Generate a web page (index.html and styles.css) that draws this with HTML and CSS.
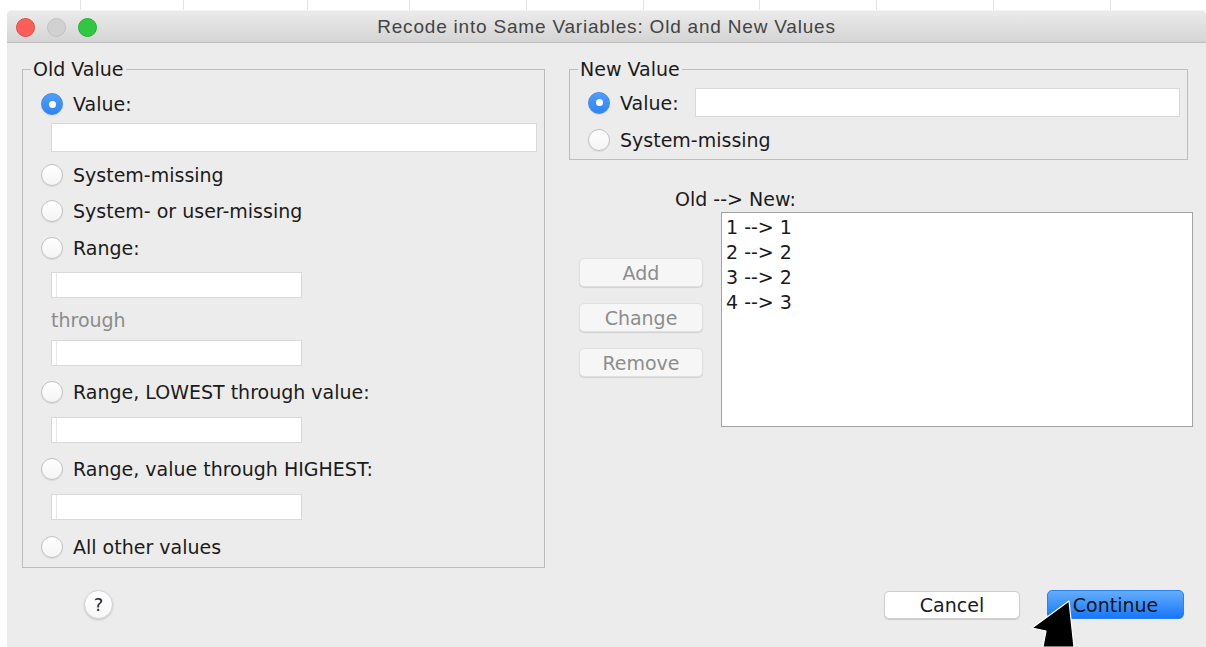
FILE: index.html
```html
<!DOCTYPE html>
<html lang="en">
<head>
<meta charset="utf-8">
<title>Recode into Same Variables: Old and New Values</title>
<link rel="stylesheet" href="styles.css">
</head>
<body>
  <div class="backdrop">
    <span class="cell w81"></span><span class="cell w103"></span><span class="cell w124"></span><span class="cell w102"></span><span class="cell w117"></span><span class="cell w117"></span><span class="cell w116"></span><span class="cell w117"></span><span class="cell w117"></span><span class="cell w117"></span>
  </div>

  <div class="window">
    <div class="titlebar">
      <div class="lights">
        <span class="light red"></span>
        <span class="light idle"></span>
        <span class="light green"></span>
      </div>
      <div class="title">Recode into Same Variables: Old and New Values</div>
      <div></div>
    </div>

    <div class="content">
      <div class="main">
        <fieldset class="group old">
          <legend>Old Value</legend>
          <div class="row first"><span class="radio on"></span>Value:</div>
          <div class="field wide"></div>
          <div class="row after-wide"><span class="radio"></span>System-missing</div>
          <div class="row next"><span class="radio"></span>System- or user-missing</div>
          <div class="row next2"><span class="radio"></span>Range:</div>
          <div class="field short f-range"></div>
          <div class="through">through</div>
          <div class="field short f-through"></div>
          <div class="row after-short"><span class="radio"></span>Range, LOWEST through value:</div>
          <div class="field short f-sub"></div>
          <div class="row after-short"><span class="radio"></span>Range, value through HIGHEST:</div>
          <div class="field short f-sub"></div>
          <div class="row last"><span class="radio"></span>All other values</div>
        </fieldset>

        <div class="right">
          <fieldset class="group new">
            <legend>New Value</legend>
            <div class="row value-row"><span class="radio on"></span><span class="value-label">Value:</span><span class="field grow"></span></div>
            <div class="row new-miss"><span class="radio"></span>System-missing</div>
          </fieldset>

          <div class="map-label">Old --&gt; New:</div>
          <div class="map-row">
            <div class="actions">
              <button class="btn disabled">Add</button>
              <button class="btn disabled">Change</button>
              <button class="btn disabled">Remove</button>
            </div>
            <div class="listbox">
              <div class="entry">1 --&gt; 1</div>
              <div class="entry">2 --&gt; 2</div>
              <div class="entry">3 --&gt; 2</div>
              <div class="entry">4 --&gt; 3</div>
            </div>
          </div>
        </div>
      </div>

      <div class="footer">
        <button class="help">?</button>
        <div class="spacer"></div>
        <button class="btn cancel">Cancel</button>
        <button class="btn primary">Continue</button>
      </div>
    </div>
  </div>

  <svg class="cursor" width="50" height="49" viewBox="0 0 50 49">
    <polygon points="39,3 44,49 13,49 16,33 2,30" fill="#000" stroke="#fff" stroke-width="1.2" stroke-linejoin="round"/>
  </svg>
</body>
</html>
```

FILE: styles.css
```css
html, body {
  margin: 0;
  padding: 0;
}

body {
  width: 1206px;
  height: 647px;
  overflow: hidden;
  background: #ffffff;
  position: relative;
  font-family: "DejaVu Sans", "Liberation Sans", sans-serif;
  font-size: 19px;
  color: #1b1b1b;
}

/* spreadsheet column rules peeking above the dialog */
.backdrop {
  display: flex;
  height: 10px;
}
.cell {
  height: 10px;
  box-sizing: border-box;
  border-right: 1px solid #e3e3e3;
}
.w81 { width: 81px; }
.w102 { width: 102px; }
.w103 { width: 103px; }
.w116 { width: 116px; }
.w117 { width: 117px; }
.w124 { width: 124px; }

/* dialog window */
.window {
  margin-left: 7px;
  width: 1199px;
  height: 637px;
  background: #ececec;
  border-radius: 5px 5px 0 0;
  overflow: hidden;
}

.titlebar {
  height: 33px;
  box-sizing: border-box;
  display: grid;
  grid-template-columns: 1fr auto 1fr;
  align-items: center;
  background: linear-gradient(#ebebeb, #d4d4d4);
  border-top: 1px solid #f4f4f4;
  border-bottom: 1px solid #bdbdbd;
}

.lights {
  display: flex;
  gap: 12px;
  padding-left: 9px;
  padding-top: 1px;
}
.light {
  width: 19px;
  height: 19px;
  border-radius: 50%;
  box-sizing: border-box;
}
.red { background: #fc5f58; border: 1px solid #e24b44; }
.idle { background: #d1d1d1; border: 1px solid #c2c2c2; }
.green { background: #2fc841; border: 1px solid #28ad37; }

.title {
  font-family: "Liberation Sans", Arial, sans-serif;
  font-size: 19px;
  letter-spacing: 0.8px;
  color: #444444;
}

.content {
  padding: 14px 13px 0 15px;
}

.main {
  display: flex;
  gap: 24px;
  align-items: flex-start;
}

/* titled group boxes */
.group {
  margin: 0;
  min-width: 0;
  box-sizing: border-box;
  border: 1px solid #bdbdbd;
  padding: 0 7px 5px 18px;
}
.group legend {
  padding: 0 2px;
  margin-left: -10px;
  line-height: 24px;
  font-size: 19px;
  color: #1b1b1b;
}

.old {
  width: 523px;
  height: 511px;
}

.row {
  display: flex;
  align-items: center;
  height: 30px;
  white-space: nowrap;
}

.radio {
  width: 22px;
  height: 22px;
  flex: none;
  box-sizing: border-box;
  border-radius: 50%;
  border: 1px solid #c2c2c2;
  background: linear-gradient(#ffffff, #f4f4f4);
  box-shadow: 0 1px 1px rgba(0, 0, 0, 0.08);
  margin-right: 10px;
  display: flex;
  align-items: center;
  justify-content: center;
}
.radio.on {
  border-color: #3a8bf3;
  background: linear-gradient(#519ef8, #2f84f3);
}
.radio.on::after {
  content: "";
  width: 7px;
  height: 7px;
  border-radius: 50%;
  background: #ffffff;
}

.field {
  background: #ffffff;
  border: 1px solid #d9d9d9;
  box-sizing: border-box;
}
.field.wide {
  margin: 4px 0 0 10px;
  height: 29px;
}
.field.short {
  width: 251px;
  height: 26px;
  margin-left: 10px;
  box-shadow: inset 4px 0 0 #ffffff, inset 5px 0 0 #e8e8e8;
}

.first { margin-top: 8px; }
.after-wide { margin-top: 8px; }
.next { margin-top: 6px; }
.next2 { margin-top: 7px; }
.f-range { margin-top: 9px; }
.f-through { margin-top: 5px; }
.f-sub { margin-top: 10px; }
.after-short { margin-top: 11px; }
.last { margin-top: 12px; }

.through {
  margin: 7px 0 0 10px;
  height: 30px;
  line-height: 30px;
  color: #8b8b8b;
}

/* right column */
.right {
  width: 624px;
}

.new {
  width: 619px;
  height: 103px;
  padding-bottom: 3px;
}
.value-row {
  margin-top: 7px;
  height: 29px;
}
.value-label {
  margin-right: 16px;
}
.field.grow {
  flex: 1;
  height: 29px;
}
.new-miss {
  margin-top: 8px;
}

.map-label {
  margin: 27px 0 0 106px;
  line-height: 24px;
}

.map-row {
  display: flex;
  margin-top: 1px;
}

.actions {
  display: flex;
  flex-direction: column;
  gap: 16px;
  width: 124px;
  margin: 46px 18px 0 10px;
}

.btn {
  font-family: "DejaVu Sans", "Liberation Sans", sans-serif;
  font-size: 19px;
  height: 29px;
  padding: 0;
  box-sizing: border-box;
  border-radius: 5px;
  color: #1b1b1b;
}
.btn.disabled {
  width: 124px;
  background: #f6f6f6;
  border: 1px solid #e0e0e0;
  color: #8d8d8d;
  box-shadow: 0 1px 1px rgba(0, 0, 0, 0.12);
}

.listbox {
  width: 472px;
  height: 215px;
  box-sizing: border-box;
  background: #ffffff;
  border: 1px solid #a3a3a3;
  padding: 2px 0 0 4px;
}
.entry {
  line-height: 25px;
  font-size: 19px;
}

/* bottom button bar */
.footer {
  display: flex;
  align-items: center;
  height: 29px;
  margin-top: 22px;
  padding-left: 62px;
  padding-right: 9px;
}
.spacer {
  flex: 1;
}

.help {
  width: 29px;
  height: 29px;
  padding: 0;
  border-radius: 50%;
  border: 1px solid #d0d0d0;
  background: linear-gradient(#ffffff, #f7f7f7);
  box-shadow: 0 1px 2px rgba(0, 0, 0, 0.18);
  font-family: "DejaVu Sans", sans-serif;
  font-size: 18px;
  color: #2a2a2a;
}

.cancel {
  width: 136px;
  height: 28px;
  background: #ffffff;
  border: 1px solid #cfcfcf;
  box-shadow: 0 1px 1px rgba(0, 0, 0, 0.15);
  margin-right: 27px;
}

.primary {
  width: 137px;
  height: 29px;
  border: 1px solid #2b7ff0;
  background: linear-gradient(#64aef9, #1676fd);
  color: #141414;
}

/* mouse pointer resting on the Continue button */
.cursor {
  position: absolute;
  left: 1030px;
  top: 598px;
}
```
